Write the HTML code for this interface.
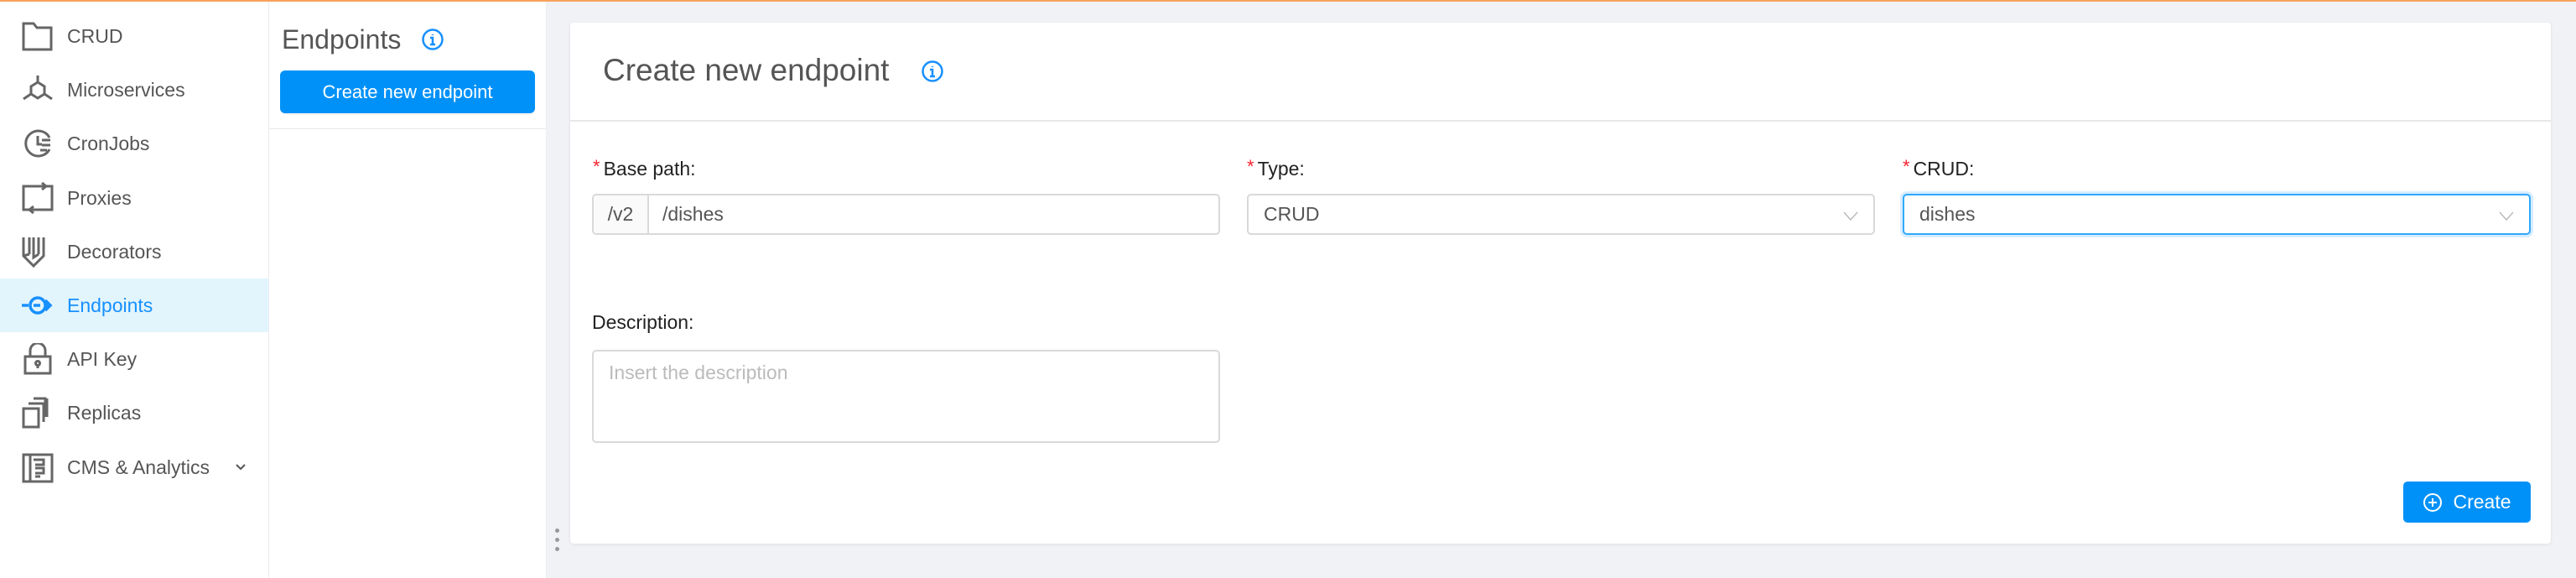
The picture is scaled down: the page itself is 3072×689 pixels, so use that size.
<!DOCTYPE html>
<html><head><meta charset="utf-8"><style>
*{box-sizing:border-box;margin:0;padding:0}
body{width:3072px;height:689px;overflow:hidden;background:#f0f2f5;font-family:"Liberation Sans",sans-serif;position:relative}
.top{position:absolute;left:0;top:0;width:3072px;height:2px;background:#f7a25b}
.side{position:absolute;left:0;top:2px;width:321px;height:687px;background:#fff;border-right:1px solid #ececf0}
.item{position:absolute;left:0;width:320px;height:64px;display:flex;align-items:center;color:#555;font-size:23px}
.item svg{position:absolute;left:26px;width:38px;height:38px}
.item span{position:absolute;left:80px}
.item.act{background:#e2f5fd;color:#1890ff}
.p2{position:absolute;left:321px;top:2px;width:331px;height:687px;background:#fff;border-right:1px solid #eceef2}
.card{position:absolute;left:680px;top:27px;width:2362px;height:621px;background:#fff;border-radius:4px;box-shadow:0 1px 4px rgba(0,0,0,.08)}
.lbl{position:absolute;font-size:23px;color:#222}
.lbl b{color:#f5222d;font-weight:normal;font-size:22px;margin-right:4px;vertical-align:3px}
.inp{position:absolute;height:49px;border:2px solid #d9d9d9;border-radius:5px;font-size:23px;color:#555;display:flex;align-items:center;padding-left:18px;background:#fff}
.chev{position:absolute;right:18px;top:15px}
</style></head><body>
<div class="top"></div>
<div class="side">
 <div class="item" style="top:9px"><svg viewBox="0 0 38 38" fill="none" stroke="#666" stroke-width="3"><path d="M2 4h12l4 5h17v26H2z"/></svg><span>CRUD</span></div>
 <div class="item" style="top:73px"><svg viewBox="0 0 38 38" fill="none" stroke="#666" stroke-width="3"><path d="M19 2v8M11 15l8-5 8 5v9l-8 5-8-5zM11 24l-9 6M27 24l9 6"/></svg><span>Microservices</span></div>
 <div class="item" style="top:137px"><svg viewBox="0 0 38 38" fill="none" stroke="#666" stroke-width="3"><path d="M33 12A15 15 0 1 0 33 26M19 10v10h5M24 15h10M24 21h10M22 27h8"/></svg><span>CronJobs</span></div>
 <div class="item" style="top:202px"><svg viewBox="0 0 38 38" fill="none" stroke="#666" stroke-width="3"><path d="M12 5H2v28h6M26 33h10V5h-6M24 1l5 4-5 4M14 29l-5 4 5 4M8 5h22M8 33h22"/></svg><span>Proxies</span></div>
 <div class="item" style="top:266px"><svg viewBox="0 0 38 38" fill="none" stroke="#666" stroke-width="3"><path d="M2 2v22l12 12 12-12V2M9 2v20M20 2v20M14 2v24l6-4M2 24l7-2"/></svg><span>Decorators</span></div>
 <div class="item act" style="top:330px"><svg viewBox="0 0 38 38" fill="none" stroke="#1890ff" stroke-width="3.5"><path d="M0 19h8M14 19h8"/><circle cx="19" cy="19" r="9"/><path d="M28 13l6 6-6 6M32 19h-4"/></svg><span>Endpoints</span></div>
 <div class="item" style="top:394px"><svg viewBox="0 0 38 38" fill="none" stroke="#666" stroke-width="3"><path d="M10 16V9a9 9 0 0 1 18 0v7M4 16h30v20H4z"/><circle cx="19" cy="24" r="2.5"/><path d="M19 26v4"/></svg><span>API Key</span></div>
 <div class="item" style="top:458px"><svg viewBox="0 0 38 38" fill="none" stroke="#666" stroke-width="3"><path d="M2 14h18v22H2zM8 8h18v22M14 2h14v22M30 2v22"/></svg><span>Replicas</span></div>
 <div class="item" style="top:523px"><svg viewBox="0 0 38 38" fill="none" stroke="#666" stroke-width="3"><path d="M2 4h34v32H2zM10 4v32M14 10h12v6H16M16 20h10v6h-10M16 30h6"/></svg><span>CMS &amp; Analytics</span><svg style="left:280px;width:14px;height:14px" viewBox="0 0 14 14" fill="none" stroke="#555" stroke-width="2"><path d="M2 4l5 5 5-5"/></svg></div>
</div>
<div class="p2">
 <div style="position:absolute;left:15px;top:27px;font-size:32px;color:#555">Endpoints</div>
 <svg style="position:absolute;left:181px;top:31px" width="28" height="28" viewBox="0 0 28 28" fill="none" stroke="#1890ff" stroke-width="2.5"><circle cx="14" cy="14" r="11.5"/><path d="M14 8v1M11 12h3v8M11 20h6"/></svg>
 <div style="position:absolute;left:13px;top:82px;width:304px;height:51px;background:#0091f8;border-radius:6px;color:#fff;font-size:22px;display:flex;align-items:center;justify-content:center;box-shadow:0 2px 0 rgba(0,0,0,.04)">Create new endpoint</div>
 <div style="position:absolute;left:0;top:151px;width:330px;height:1px;background:#e8e8e8"></div>
</div>
<div style="position:absolute;left:662px;top:630px;width:5px">
 <div style="width:5px;height:5px;border-radius:50%;background:#999;margin-bottom:6px"></div>
 <div style="width:5px;height:5px;border-radius:50%;background:#999;margin-bottom:6px"></div>
 <div style="width:5px;height:5px;border-radius:50%;background:#999"></div>
</div>
<div class="card">
 <div style="position:absolute;left:39px;top:36px;font-size:37px;color:#555">Create new endpoint</div>
 <svg style="position:absolute;left:418px;top:44px" width="28" height="28" viewBox="0 0 28 28" fill="none" stroke="#1890ff" stroke-width="2.5"><circle cx="14" cy="14" r="11.5"/><path d="M14 8v1M11 12h3v8M11 20h6"/></svg>
 <div style="position:absolute;left:0;top:116px;width:2362px;height:2px;background:#e8e8e8"></div>
 <div class="lbl" style="left:27px;top:159px"><b>*</b>Base path:</div>
 <div class="inp" style="left:26px;top:204px;width:749px;padding-left:0"><div style="width:66px;height:45px;background:#fafafa;border-right:2px solid #d9d9d9;display:flex;align-items:center;justify-content:center;border-radius:4px 0 0 4px">/v2</div><div style="padding-left:16px">/dishes</div></div>
 <div class="lbl" style="left:807px;top:159px"><b>*</b>Type:</div>
 <div class="inp" style="left:807px;top:204px;width:749px">CRUD<svg class="chev" width="18" height="18" viewBox="0 0 18 18" fill="none" stroke="#bbb" stroke-width="1.5"><path d="M1 5l8 9 8-9"/></svg></div>
 <div class="lbl" style="left:1589px;top:159px"><b>*</b>CRUD:</div>
 <div class="inp" style="left:1589px;top:204px;width:749px;border-color:#2fa9fb;box-shadow:0 0 0 3px #d6ecff">dishes<svg class="chev" width="18" height="18" viewBox="0 0 18 18" fill="none" stroke="#bbb" stroke-width="1.5"><path d="M1 5l8 9 8-9"/></svg></div>
 <div class="lbl" style="left:26px;top:344px">Description:</div>
 <div class="inp" style="left:26px;top:390px;width:749px;height:111px;align-items:flex-start;padding-top:12px;color:#bbb">Insert the description</div>
 <div style="position:absolute;left:2186px;top:547px;width:152px;height:49px;background:#0091f8;border-radius:5px;color:#fff;font-size:23px;display:flex;align-items:center;justify-content:center;gap:12px"><svg width="24" height="24" viewBox="0 0 24 24" fill="none" stroke="#fff" stroke-width="2"><circle cx="12" cy="12" r="10"/><path d="M12 7v10M7 12h10"/></svg>Create</div>
</div>
</body></html>
